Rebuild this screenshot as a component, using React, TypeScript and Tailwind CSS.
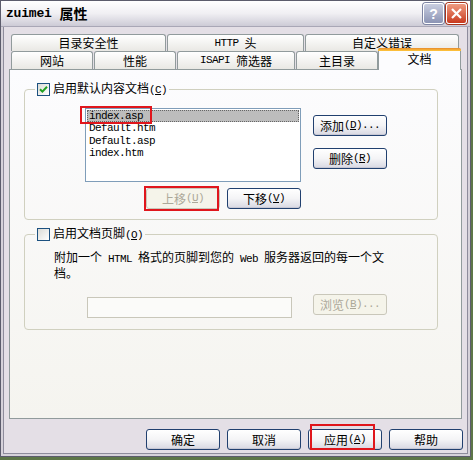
import React from 'react';

// latin bits in a narrow mono, like the old bitmap font
function L({ children }: { children: React.ReactNode }) {
  return <span className="font-['Liberation_Mono'] text-[11px] tracking-[-0.6px]">{children}</span>;
}

function Key({ k }: { k: string }) {
  return (
    <L>
      (<span className="underline underline-offset-1">{k}</span>)
    </L>
  );
}

function Checkbox({ checked }: { checked?: boolean }) {
  return (
    <div className="w-[13px] h-[13px] border border-[#1c5180] bg-gradient-to-br from-[#dcdcd7] to-white flex items-center justify-center">
      {checked && (
        <svg width="9" height="9" viewBox="0 0 9 9">
          <path d="M1 4.2 L3.4 6.6 L8 1.8" fill="none" stroke="#21a121" strokeWidth="2" />
        </svg>
      )}
    </div>
  );
}

function Btn({ children, disabled, className = '' }: { children: React.ReactNode; disabled?: boolean; className?: string }) {
  const look = disabled
    ? 'border-[#c9c7ba] text-[#aca899] bg-[#f5f4ea]'
    : 'border-[#21406f] text-black bg-gradient-to-b from-white via-[#f4f4f6] to-[#d8d8e2] shadow-[inset_0_-1px_0_#c8c8d4]';
  return (
    <div className={`relative flex items-center justify-center rounded-[3px] border w-[74px] h-[21px] text-[12px] leading-none ${look} ${className}`}>
      {children}
    </div>
  );
}

function Tab({ children, w }: { children: React.ReactNode; w: string }) {
  return (
    <div className={`${w} h-full flex items-center justify-center border border-b-0 border-[#919b9c] rounded-t-[3px] bg-gradient-to-b from-white to-[#e9e8e4] text-[12px] leading-none`}>
      {children}
    </div>
  );
}

const files = ['Default.htm', 'Default.asp', 'index.htm'];

export default function App() {
  return (
    <div className="w-[473px] h-[460px] bg-[#5d7648] overflow-hidden font-['Noto_Sans_CJK_SC',sans-serif] text-black">
      <div className="w-[471px] h-[457px] flex flex-col border border-[#5c5c6c] bg-[#e4dfe6] shadow-[inset_0_0_0_2px_#d6d2da,inset_0_0_0_3px_#8e8c9c]">
        {/* title bar */}
        <div className="h-[26px] flex items-center pl-[5px] pr-[3px] bg-gradient-to-b from-white via-[#f0eff3] to-[#cdcbd6] border-b border-[#a9a7b6]">
          <span className="font-['Liberation_Mono'] font-bold text-[13px] tracking-[-0.2px]">zuimei</span>
          <span className="ml-[8px] font-bold text-[14px]">属性</span>
          <div className="ml-auto flex gap-[2px]">
            <div className="w-[21px] h-[21px] rounded-[3px] border border-white bg-gradient-to-b from-[#c9cee0] to-[#8c94b4] flex items-center justify-center text-white font-bold text-[14px] leading-none font-['Liberation_Sans'] shadow-[0_0_0_1px_#7d84a2]">
              ?
            </div>
            <div className="w-[21px] h-[21px] rounded-[3px] border border-white bg-gradient-to-b from-[#ee9a80] to-[#c8381c] flex items-center justify-center shadow-[0_0_0_1px_#a8341c]">
              <svg width="13" height="13" viewBox="0 0 13 13">
                <path d="M2 2 L11 11 M11 2 L2 11" stroke="white" strokeWidth="2.2" />
              </svg>
            </div>
          </div>
        </div>

        <div className="flex flex-col pl-[8px] pr-[8px] pt-[7px]">
          {/* tabs */}
          <div className="flex gap-[1px] ml-[2px] h-[17px]">
            <Tab w="w-[155px]">目录安全性</Tab>
            <Tab w="w-[137px]">
              <L>HTTP</L>
              <span className="ml-[6px]">头</span>
            </Tab>
            <Tab w="w-[154px]">自定义错误</Tab>
          </div>
          <div className="flex items-end ml-[2px] h-[18px]">
            <div className="flex gap-[1px] h-full">
              <Tab w="w-[82px]">网站</Tab>
              <Tab w="w-[82px]">性能</Tab>
              <Tab w="w-[118px]">
                <L>ISAPI</L>
                <span className="ml-[6px]">筛选器</span>
              </Tab>
              <Tab w="w-[82px]">主目录</Tab>
            </div>
            <div className="relative z-10 w-[83px] h-[22px] -mb-[1px] border-x border-[#919b9c] rounded-t-[3px] bg-[#fcfcfe] flex flex-col">
              <div className="h-[3px] rounded-t-[2px] bg-gradient-to-b from-[#e68b2c] to-[#ffc83c] -mx-[1px]" />
              <div className="flex-1 flex items-start justify-center pt-[2px] text-[12px] leading-none">文档</div>
            </div>
          </div>

          {/* panel */}
          <div className="h-[350px] w-[453px] border border-[#919b9c] bg-gradient-to-b from-[#fcfcfe] to-[#f5f4ef] pl-[14px] pt-[12px]">
            <fieldset className="w-[414px] border border-[#d0d0bf] rounded-[4px] pb-[10px]">
              <legend className="ml-[10px] px-[2px] h-[14px] flex items-center gap-[3px] text-[12px] leading-none">
                <Checkbox checked />
                <span>
                  启用默认内容文档<Key k="C" />
                </span>
              </legend>
              <div className="flex pl-[60px] pt-[12px]">
                <div className="flex flex-col">
                  <div className="relative w-[216px] h-[74px] border border-[#7f9db9] bg-white pt-[1px] font-['Liberation_Mono'] text-[11px] tracking-[-0.6px]">
                    <div className="h-[12.3px] leading-[12.3px] mx-[1px] pl-[2px] bg-[#bdbdbd] outline-1 outline-dotted outline-[#666] -outline-offset-1">index.asp</div>
                    {files.map((f) => (
                      <div key={f} className="h-[12.3px] leading-[12.3px] pl-[3px]">
                        {f}
                      </div>
                    ))}
                    <div className="absolute left-[-6px] top-[-3px] w-[72px] h-[18px] border-2 border-[#e0161c]" />
                  </div>
                  <div className="flex justify-end gap-[7px] mt-[6px]">
                    <Btn disabled>
                      上移<Key k="U" />
                      <div className="absolute left-[-3px] top-[-3px] w-[75px] h-[25px] border-2 border-[#e0161c]" />
                    </Btn>
                    <Btn>
                      下移<Key k="V" />
                    </Btn>
                  </div>
                </div>
                <div className="flex flex-col ml-[12px] pt-[7px] gap-[12px]">
                  <Btn>
                    添加<Key k="D" />
                    <L>...</L>
                  </Btn>
                  <Btn>
                    删除<Key k="R" />
                  </Btn>
                </div>
              </div>
            </fieldset>

            <fieldset className="w-[414px] mt-[7px] border border-[#d0d0bf] rounded-[4px] pb-[11px]">
              <legend className="ml-[10px] px-[2px] h-[14px] flex items-center gap-[3px] text-[12px] leading-none">
                <Checkbox />
                <span>
                  启用文档页脚<Key k="O" />
                </span>
              </legend>
              <p className="pl-[29px] pt-[9px] text-[12px] leading-[13px]">
                附加一个<L> HTML </L>格式的页脚到您的<L> Web </L>服务器返回的每一个文
                <br />
                档。
              </p>
              <div className="flex items-start pl-[62px] mt-[15px]">
                <div className="mt-[3px] w-[205px] h-[21px] border border-[#c9c7ba] bg-[#fbfbf9]" />
                <Btn disabled className="ml-[21px]">
                  浏览<Key k="B" />
                  <L>...</L>
                </Btn>
              </div>
            </fieldset>
          </div>

          {/* footer buttons */}
          <div className="flex justify-end gap-[7px] mt-[10px] -mr-[1px]">
            <Btn className="h-[20px]">确定</Btn>
            <Btn className="h-[20px]">取消</Btn>
            <Btn className="h-[20px]">
              应用<Key k="A" />
              <div className="absolute left-[1px] top-[-6px] w-[65px] h-[26px] border-2 border-[#e0161c]" />
            </Btn>
            <Btn className="h-[20px]">帮助</Btn>
          </div>
        </div>
      </div>
    </div>
  );
}
